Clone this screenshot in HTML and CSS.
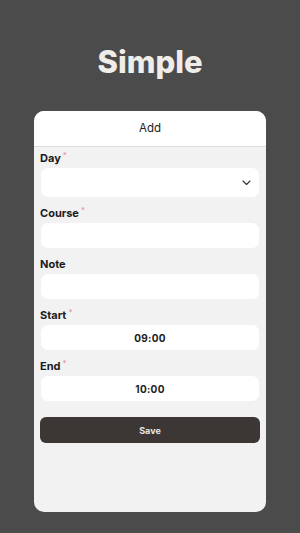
FILE: index.html
```html
<!DOCTYPE html>
<html lang="en">
<head>
  <meta charset="UTF-8" />
  <meta name="viewport" content="width=device-width, initial-scale=1" />
  <title>Simple</title>
  <link rel="stylesheet" href="styles.css">
</head>
<body>

  <h1 class="app-title">Simple</h1>

  <div class="card">
    <div class="card-header">Add</div>

    <form class="add-form">
      <div class="field">
        <label>Day<span class="req">*</span></label>
        <div class="input select">
          <svg width="9" height="6" viewBox="0 0 9 6">
            <path d="M1 1 L4.5 4.5 L8 1" fill="none" stroke="#333" stroke-width="1.1" stroke-linecap="round" stroke-linejoin="round" />
          </svg>
        </div>
      </div>

      <div class="field">
        <label>Course<span class="req">*</span></label>
        <div class="input"></div>
      </div>

      <div class="field">
        <label>Note</label>
        <div class="input"></div>
      </div>

      <div class="field">
        <label>Start<span class="req">*</span></label>
        <div class="input time">09:00</div>
      </div>

      <div class="field">
        <label>End<span class="req">*</span></label>
        <div class="input time">10:00</div>
      </div>

      <button type="button" class="save-btn">Save</button>
    </form>
  </div>

</body>
</html>
```

FILE: styles.css
```css
body {
  font-family: Inter, "Noto Sans", sans-serif;
  margin: 0;
  padding: 0;
  background: #4b4b4b;
  color: #1c1c1c;
  height: 533px;
  overflow: hidden;
}

.app-title {
  margin: 0;
  padding-top: 43px;
  height: 111px;
  box-sizing: border-box;
  text-align: center;
  font-size: 31px;
  font-weight: 800;
  line-height: 38px;
  color: #efedea;
}

.card {
  margin: 0 34px;
  height: 401px;
  background: #f2f2f2;
  border-radius: 10px;
  overflow: hidden;
}

.card-header {
  height: 35px;
  line-height: 35px;
  text-align: center;
  font-size: 11.5px;
  background: #fff;
  border-bottom: 1px solid #dcdcdc;
}

.add-form {
  padding: 0 6px;
}

.field label {
  display: block;
  height: 14px;
  margin: 9px 0 3px;
  line-height: 14px;
  font-size: 11px;
  font-weight: 700;
}

.field:first-child label {
  margin-top: 4px;
}

.req {
  position: relative;
  top: -4px;
  color: #e8909a;
  font-size: 8px;
  font-weight: 400;
  margin-left: 2px;
}

.input {
  height: 25px;
  margin: 0 1px;
  background: #fff;
  border-radius: 7px;
  display: flex;
  align-items: center;
  justify-content: center;
}

.select {
  height: 29px;
  justify-content: flex-end;
  padding-right: 8px;
}

.time {
  font-size: 10px;
  font-weight: 700;
  letter-spacing: 0.3px;
}

.save-btn {
  display: block;
  width: 100%;
  height: 26px;
  margin-top: 16px;
  background: #3c3734;
  color: #e8e6e3;
  border: none;
  border-radius: 6px;
  font-family: inherit;
  font-size: 9px;
  font-weight: 700;
}
```
